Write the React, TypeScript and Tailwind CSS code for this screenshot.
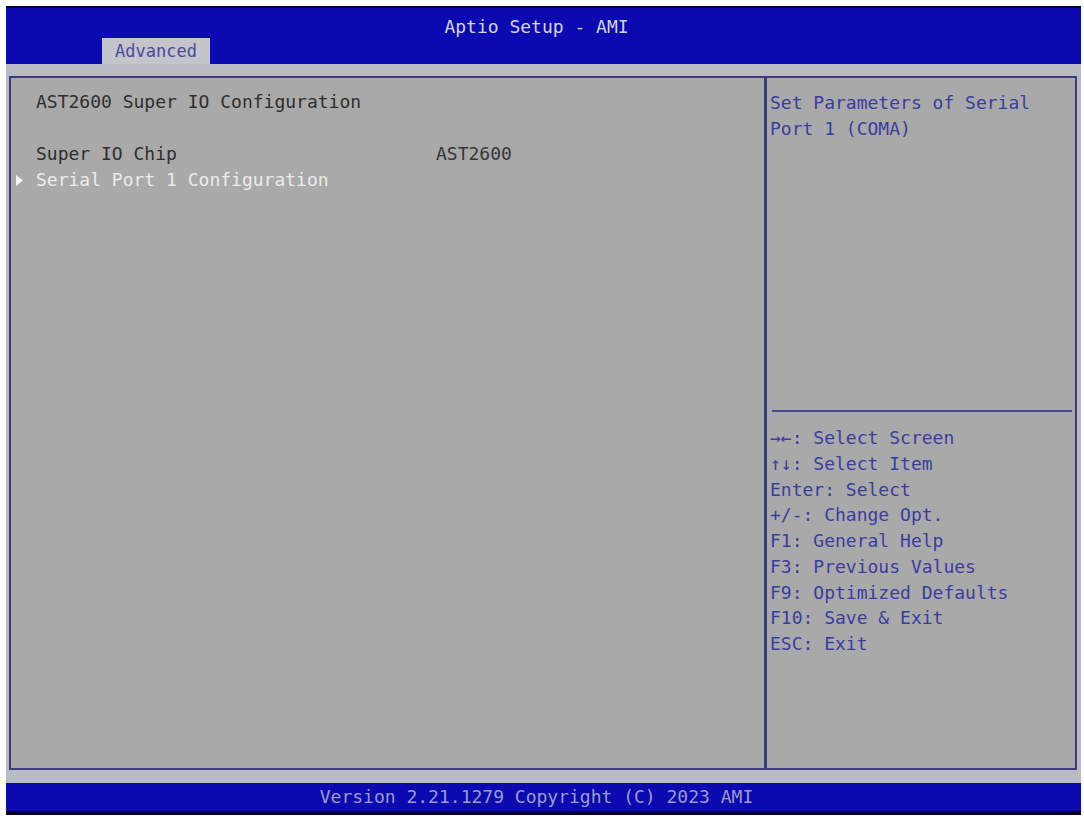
const HELP = [
  "→←: Select Screen",
  "↑↓: Select Item",
  "Enter: Select",
  "+/-: Change Opt.",
  "F1: General Help",
  "F3: Previous Values",
  "F9: Optimized Defaults",
  "F10: Save & Exit",
  "ESC: Exit",
];

export default function App() {
  return (
    <div
      className="w-[1084px] h-[818px] bg-white pt-[6px] pl-[6px] pr-[3px] pb-[3px] flex flex-col text-[18px] leading-[26px]"
      style={{ fontFamily: '"DejaVu Sans Mono", "Liberation Mono", monospace' }}
    >
      {/* Header */}
      <div className="relative h-[58px] shrink-0 bg-[#0a0ab0] border-t-2 border-[#00004a]">
        <div className="text-center text-[#d4d4e8] pt-[6px] pr-[14px]">Aptio Setup - AMI</div>
        <div className="absolute left-[96px] bottom-0 w-[108px] h-[26px] bg-[#c4c4cc] text-[#4a4a9a] text-[17px] leading-[26px] text-center">
          Advanced
        </div>
      </div>

      {/* Body */}
      <div className="flex-1 bg-[#babac2] pt-[12px] pb-[13px] pl-[3px] pr-[4px] flex">
        <div className="flex-1 flex border-2 border-[#3c3c7c] bg-[#a9a9a9]">
          {/* Left */}
          <div className="w-[753px] pt-[11px] pl-[25px]">
            <div className="text-[#2e2e2e]">AST2600 Super IO Configuration</div>
            <div className="h-[26px]" />
            <div className="flex text-[#2e2e2e]">
              <div className="w-[400px]">Super IO Chip</div>
              <div className="text-[#363636]">AST2600</div>
            </div>
            <div className="relative text-[#ececec]">
              <svg className="absolute left-[-20px] top-[8px]" width="7" height="11" viewBox="0 0 7 11">
                <path d="M0 0 L7 5.5 L0 11 Z" fill="#f4f4f4" />
              </svg>
              Serial Port 1 Configuration
            </div>
          </div>

          {/* Divider */}
          <div className="w-[3px] bg-[#3c3c7c]" />

          {/* Right */}
          <div className="flex-1 flex flex-col pl-[3px] pr-[3px]">
            <div className="h-[332px] pt-[12px] text-[#3c3ca0]">
              <div>Set Parameters of Serial</div>
              <div>Port 1 (COMA)</div>
            </div>
            <div className="h-[2px] bg-[#4a4a8e] ml-[2px]" />
            <div className="pt-[13px] text-[#3c3ca0] leading-[25.75px]">
              {HELP.map((h) => (
                <div key={h}>{h}</div>
              ))}
            </div>
          </div>
        </div>
      </div>

      {/* Footer */}
      <div className="h-[32px] shrink-0 bg-[#0a0ab0] border-b-4 border-[#00002a] text-center text-[#9c9cc8] leading-[28px] pr-[14px]">
        Version 2.21.1279 Copyright (C) 2023 AMI
      </div>
    </div>
  );
}
